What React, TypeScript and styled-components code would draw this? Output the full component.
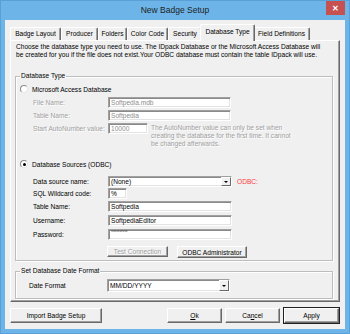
import styled, { createGlobalStyle } from 'styled-components';

const GlobalStyle = createGlobalStyle`
  html, body {
    margin: 0;
    padding: 0;
    background: #6db5e8;
  }
  body {
    font-family: 'Liberation Sans', Arial, sans-serif;
  }
`;

const Window = styled.div`
  display: flex;
  flex-direction: column;
  box-sizing: border-box;
  width: 350px;
  height: 334px;
  padding: 0 5px 5px;
  background: #6db5e8;
  box-shadow: inset 0 0 0 1px #5a9fd6;
`;

const TitleBar = styled.div`
  display: flex;
  align-items: flex-start;
  height: 20px;
`;

const Title = styled.div`
  flex: 1;
  padding-left: 19px;
  font-size: 8.5px;
  line-height: 20px;
  text-align: center;
  color: #1e1e1e;
`;

const CloseButton = styled.div`
  display: flex;
  justify-content: center;
  align-items: center;
  width: 19px;
  height: 14px;
  margin-top: 1px;
  background: #c75050;
  color: #fff;
  font-size: 8px;
  font-weight: 700;
`;

const Client = styled.div`
  display: flex;
  flex-direction: column;
  flex: 1;
  padding: 4px 5px 5px;
  background: #f0f0f0;
  font-size: 6.6px;
  color: #000;
`;

const TabStrip = styled.div`
  display: flex;
  align-items: flex-end;
  height: 16px;
  position: relative;
  z-index: 2;
`;

const Tab = styled.div<{ $w: number; $active?: boolean }>`
  box-sizing: border-box;
  width: ${(p) => (p.$active ? p.$w + 4 : p.$w)}px;
  height: ${(p) => (p.$active ? 17 : 13)}px;
  margin: ${(p) => (p.$active ? '0 -2px -1px' : '0')};
  border-top: 1px solid #fff;
  border-left: 1px solid #fff;
  border-right: 1px solid #696969;
  border-radius: 2px 2px 0 0;
  box-shadow: inset -1px 0 #a0a0a0;
  background: #f0f0f0;
  line-height: ${(p) => (p.$active ? 14 : 12)}px;
  text-align: center;
  white-space: nowrap;
  position: relative;
  z-index: ${(p) => (p.$active ? 2 : 1)};
`;

const Panel = styled.div`
  display: flex;
  flex-direction: column;
  border: 1px solid #fff;
  border-right-color: #696969;
  border-bottom-color: #696969;
  box-shadow: inset -1px -1px #a0a0a0;
  padding: 2px 6px 2px 4px;
`;

const Intro = styled.div`
  padding-left: 1px;
  line-height: 8px;
  white-space: nowrap;
`;

const GroupBox = styled.fieldset<{ $mt: number; $pb: number }>`
  min-width: 0;
  margin: ${(p) => p.$mt}px 0 0;
  padding: 4px 4px ${(p) => p.$pb}px;
  border: 1px solid #bdbdbd;
  box-shadow: 1px 1px #fff, inset 1px 1px #fff;
`;

const Legend = styled.legend`
  padding: 0 1px;
  line-height: 8px;
`;

const RadioRow = styled.div<{ $mt: number }>`
  display: flex;
  align-items: center;
  gap: 4px;
  height: 10px;
  margin-top: ${(p) => p.$mt}px;
`;

const Radio = styled.span<{ $checked?: boolean }>`
  display: flex;
  justify-content: center;
  align-items: center;
  box-sizing: border-box;
  width: 8px;
  height: 8px;
  border-radius: 50%;
  border: 1px solid #8a8a8a;
  border-right-color: #e6e6e6;
  border-bottom-color: #e6e6e6;
  background: #fff;

  &::after {
    content: '';
    width: 3px;
    height: 3px;
    border-radius: 50%;
    background: ${(p) => (p.$checked ? '#000' : 'transparent')};
  }
`;

const FieldRow = styled.div<{ $mt: number; $indent: number }>`
  display: flex;
  align-items: flex-start;
  margin-top: ${(p) => p.$mt}px;
  padding-left: ${(p) => p.$indent}px;
`;

const Label = styled.span<{ $w: number; $h?: number; $disabled?: boolean }>`
  width: ${(p) => p.$w}px;
  line-height: ${(p) => p.$h ?? 11}px;
  color: ${(p) => (p.$disabled ? '#a0a0a0' : '#000')};
  text-shadow: ${(p) => (p.$disabled ? '1px 1px #fff' : 'none')};
  white-space: nowrap;
`;

const TextBox = styled.div<{ $w: number; $h?: number; $disabled?: boolean }>`
  display: flex;
  align-items: center;
  box-sizing: border-box;
  width: ${(p) => p.$w}px;
  height: ${(p) => p.$h ?? 11}px;
  padding-left: 2px;
  border: 1px solid #a0a0a0;
  border-right-color: #fff;
  border-bottom-color: #fff;
  box-shadow: inset 1px 1px #8a8a8a, inset -1px -1px #e3e3e3;
  background: #fff;
  color: ${(p) => (p.$disabled ? '#8d8d8d' : '#000')};
  white-space: nowrap;
`;

const Value = styled.span`
  flex: 1;
`;

const Masked = styled.span`
  align-self: flex-start;
  font-size: 5px;
  line-height: 5px;
  color: #555;
  letter-spacing: -0.3px;
`;

const DropArrow = styled.span`
  display: flex;
  justify-content: center;
  align-items: center;
  box-sizing: border-box;
  width: 10px;
  height: 100%;
  border: 1px solid #fff;
  border-right-color: #696969;
  border-bottom-color: #696969;
  background: #f0f0f0;

  &::after {
    content: '';
    border-left: 2px solid transparent;
    border-right: 2px solid transparent;
    border-top: 2px solid #000;
  }
`;

const Note = styled.div`
  margin: 1px 0 0 3px;
  line-height: 8px;
  color: #a0a0a0;
  text-shadow: 1px 1px #fff;
  white-space: nowrap;
`;

const OdbcMark = styled.span`
  margin-left: 5px;
  line-height: 11px;
  color: #ff3b3b;
`;

const Button = styled.button<{ $w: number; $h: number; $ml?: number; $disabled?: boolean; $default?: boolean }>`
  box-sizing: border-box;
  width: ${(p) => p.$w}px;
  height: ${(p) => p.$h}px;
  margin-left: ${(p) => p.$ml ?? 0}px;
  padding: 0;
  border: 1px solid #fff;
  border-right-color: #696969;
  border-bottom-color: #696969;
  box-shadow: inset -1px -1px #a0a0a0;
  outline: ${(p) => (p.$default ? '1px solid #202020' : 'none')};
  background: #f0f0f0;
  font-family: 'Liberation Sans', Arial, sans-serif;
  font-size: 6.6px;
  color: ${(p) => (p.$disabled ? '#a0a0a0' : '#000')};
  text-shadow: ${(p) => (p.$disabled ? '1px 1px #fff' : 'none')};
  white-space: nowrap;
`;

const ButtonBar = styled.div`
  display: flex;
  justify-content: space-between;
  margin-top: 6px;
`;

const ButtonGroup = styled.div`
  display: flex;
  gap: 3px;
  padding-right: 1px;
`;

const tabs = [
  { label: 'Badge Layout', w: 51 },
  { label: 'Producer', w: 37 },
  { label: 'Folders', w: 29 },
  { label: 'Color Code', w: 41 },
  { label: 'Security', w: 34 },
  { label: 'Database Type', w: 51, active: true },
  { label: 'Field Definitions', w: 57 },
];

export default function App() {
  return (
    <>
      <GlobalStyle />
      <Window>
        <TitleBar>
          <Title>New Badge Setup</Title>
          <CloseButton>✕</CloseButton>
        </TitleBar>
        <Client>
          <TabStrip>
            {tabs.map((t) => (
              <Tab key={t.label} $w={t.w} $active={t.active}>
                {t.label}
              </Tab>
            ))}
          </TabStrip>
          <Panel>
            <Intro>
              Choose the database type you need to use. The IDpack Database or the Microsoft Access Database will
              <br />
              be created for you if the file does not exist.Your ODBC database must contain the table IDpack will use.
            </Intro>

            <GroupBox $mt={13} $pb={2}>
              <Legend>Database Type</Legend>
              <RadioRow $mt={0}>
                <Radio />
                Microsoft Access Database
              </RadioRow>
              <FieldRow $mt={3} $indent={13}>
                <Label $w={75} $disabled>File Name:</Label>
                <TextBox $w={123} $disabled>Softpedia.mdb</TextBox>
              </FieldRow>
              <FieldRow $mt={2} $indent={13}>
                <Label $w={75} $disabled>Table Name:</Label>
                <TextBox $w={123} $disabled>Softpedia</TextBox>
              </FieldRow>
              <FieldRow $mt={2} $indent={13}>
                <Label $w={75} $disabled>Start AutoNumber value:</Label>
                <TextBox $w={40} $disabled>10000</TextBox>
                <Note>
                  The AutoNumber value can only be set when
                  <br />
                  creating the database for the first time. It cannot
                  <br />
                  be changed afterwards.
                </Note>
              </FieldRow>

              <RadioRow $mt={11}>
                <Radio $checked />
                Database Sources (ODBC)
              </RadioRow>
              <FieldRow $mt={7} $indent={13}>
                <Label $w={75}>Data source name:</Label>
                <TextBox $w={124}>
                  <Value>(None)</Value>
                  <DropArrow />
                </TextBox>
                <OdbcMark>ODBC:</OdbcMark>
              </FieldRow>
              <FieldRow $mt={1} $indent={13}>
                <Label $w={75}>SQL Wildcard code:</Label>
                <TextBox $w={19}>%</TextBox>
              </FieldRow>
              <FieldRow $mt={2} $indent={13}>
                <Label $w={75}>Table Name:</Label>
                <TextBox $w={124}>Softpedia</TextBox>
              </FieldRow>
              <FieldRow $mt={3} $indent={13}>
                <Label $w={75}>Username:</Label>
                <TextBox $w={124}>SoftpediaEditor</TextBox>
              </FieldRow>
              <FieldRow $mt={3} $indent={13}>
                <Label $w={75}>Password:</Label>
                <TextBox $w={124}>
                  <Masked>**********</Masked>
                </TextBox>
              </FieldRow>
              <FieldRow $mt={6} $indent={87}>
                <Button $w={61} $h={11} $disabled>Test Connection</Button>
                <Button $w={70} $h={12} $ml={9}>ODBC Administrator</Button>
              </FieldRow>
            </GroupBox>

            <GroupBox $mt={6} $pb={6}>
              <Legend>Set Database Date Format</Legend>
              <FieldRow $mt={0} $indent={9}>
                <Label $w={78} $h={13}>Date Format</Label>
                <TextBox $w={123} $h={13}>
                  <Value>MM/DD/YYYY</Value>
                  <DropArrow />
                </TextBox>
              </FieldRow>
            </GroupBox>
          </Panel>

          <ButtonBar>
            <Button $w={92} $h={15}>Import Badge Setup</Button>
            <ButtonGroup>
              <Button $w={55} $h={15}>
                <u>O</u>k
              </Button>
              <Button $w={55} $h={15} $ml={0}>
                Ca<u>n</u>cel
              </Button>
              <Button $w={55} $h={15} $ml={1} $default>
                Apply
              </Button>
            </ButtonGroup>
          </ButtonBar>
        </Client>
      </Window>
    </>
  );
}
